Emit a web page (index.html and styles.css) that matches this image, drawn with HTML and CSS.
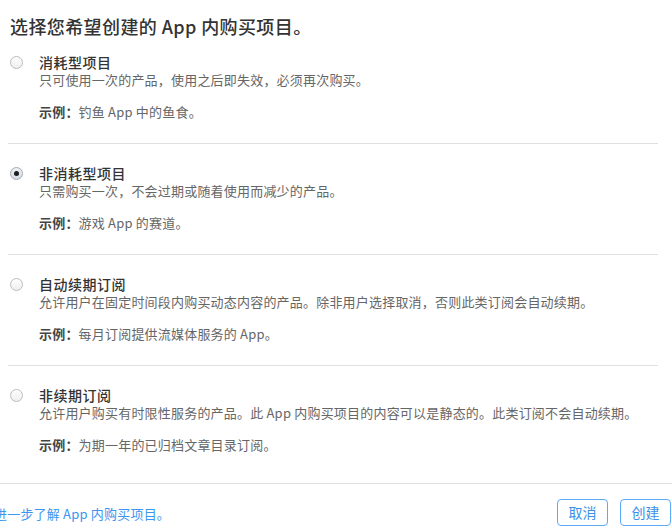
FILE: index.html
```html
<!DOCTYPE html>
<html lang="zh-CN">
<head>
<meta charset="utf-8">
<link rel="stylesheet" href="styles.css">
</head>
<body>
<div class="dialog">
  <div class="main">
    <h1 class="heading">选择您希望创建的 App 内购买项目。</h1>
    <div class="options">
      <div class="option">
        <span class="radio"></span>
        <div class="body">
          <div class="title">消耗型项目</div>
          <div class="desc">只可使用一次的产品，使用之后即失效，必须再次购买。</div>
          <div class="example"><b>示例：</b>钓鱼 App 中的鱼食。</div>
        </div>
      </div>
      <div class="option">
        <span class="radio checked"></span>
        <div class="body">
          <div class="title">非消耗型项目</div>
          <div class="desc">只需购买一次，不会过期或随着使用而减少的产品。</div>
          <div class="example"><b>示例：</b>游戏 App 的赛道。</div>
        </div>
      </div>
      <div class="option">
        <span class="radio"></span>
        <div class="body">
          <div class="title">自动续期订阅</div>
          <div class="desc">允许用户在固定时间段内购买动态内容的产品。除非用户选择取消，否则此类订阅会自动续期。</div>
          <div class="example"><b>示例：</b>每月订阅提供流媒体服务的 App。</div>
        </div>
      </div>
      <div class="option last">
        <span class="radio"></span>
        <div class="body">
          <div class="title">非续期订阅</div>
          <div class="desc">允许用户购买有时限性服务的产品。此 App 内购买项目的内容可以是静态的。此类订阅不会自动续期。</div>
          <div class="example"><b>示例：</b>为期一年的已归档文章目录订阅。</div>
        </div>
      </div>
    </div>
  </div>
  <div class="footer">
    <a class="learn" href="#">进一步了解 App 内购买项目。</a>
    <div class="buttons">
      <button class="btn">取消</button>
      <button class="btn">创建</button>
    </div>
  </div>
</div>
</body>
</html>
```
FILE: styles.css
```css
* { box-sizing: border-box; }
html, body { margin: 0; padding: 0; background: #fff; }
body {
  font-family: "Noto Sans CJK SC", "Noto Sans", sans-serif;
  color: #333;
  overflow: hidden;
  width: 672px;
  height: 531px;
}
.main {
  margin: 0 14px 0 8px;
}
.heading {
  margin: 0;
  padding: 14px 0 0 2px;
  font-size: 18px;
  line-height: 24px;
  font-weight: 500;
  letter-spacing: 0.4px;
  color: #333;
}
.option {
  display: flex;
  align-items: flex-start;
  padding: 20px 0 22px 2px;
  border-bottom: 1px solid #e0e0e0;
}
.option:first-child { padding-top: 15px; }
.option.last { border-bottom: none; padding-bottom: 29px; }
.radio {
  flex: none;
  width: 13px;
  height: 13px;
  margin-top: 3px;
  margin-right: 16px;
  border-radius: 50%;
  border: 1px solid #bdbdbd;
  background: linear-gradient(#fdfdfd, #efefef);
  display: flex;
  align-items: center;
  justify-content: center;
}
.radio.checked {
  border-color: #a3aab4;
  background: linear-gradient(#eef1f5, #d6dbe2);
}
.radio.checked::after {
  content: "";
  width: 5px;
  height: 5px;
  border-radius: 50%;
  background: #1d1d1d;
}
.title {
  font-size: 14px;
  line-height: 18px;
  font-weight: 500;
  letter-spacing: 0.5px;
  color: #333;
}
.desc {
  font-size: 13px;
  line-height: 18px;
  letter-spacing: 0.2px;
  color: #666;
}
.example {
  margin-top: 14px;
  font-size: 13px;
  line-height: 18px;
  letter-spacing: 0.2px;
  color: #666;
}
.example b { font-weight: 600; color: #444; }
.footer {
  border-top: 1px solid #e0e0e0;
  display: flex;
  align-items: center;
  justify-content: space-between;
  padding: 15px 1px 0 0;
}
.learn {
  margin-left: -6px;
  font-size: 13px;
  line-height: 18px;
  letter-spacing: 0.2px;
  color: #3a96f0;
  text-decoration: none;
  margin-top: 3px;
}
.buttons { display: flex; gap: 12px; }
.btn {
  width: 51px;
  height: 27px;
  padding: 0;
  border: 1px solid #5ca9f6;
  border-radius: 4px;
  background: #fff;
  color: #3a8fe8;
  font-family: "Noto Sans CJK SC", "Noto Sans", sans-serif;
  font-size: 14px;
  line-height: 25px;
}
```
